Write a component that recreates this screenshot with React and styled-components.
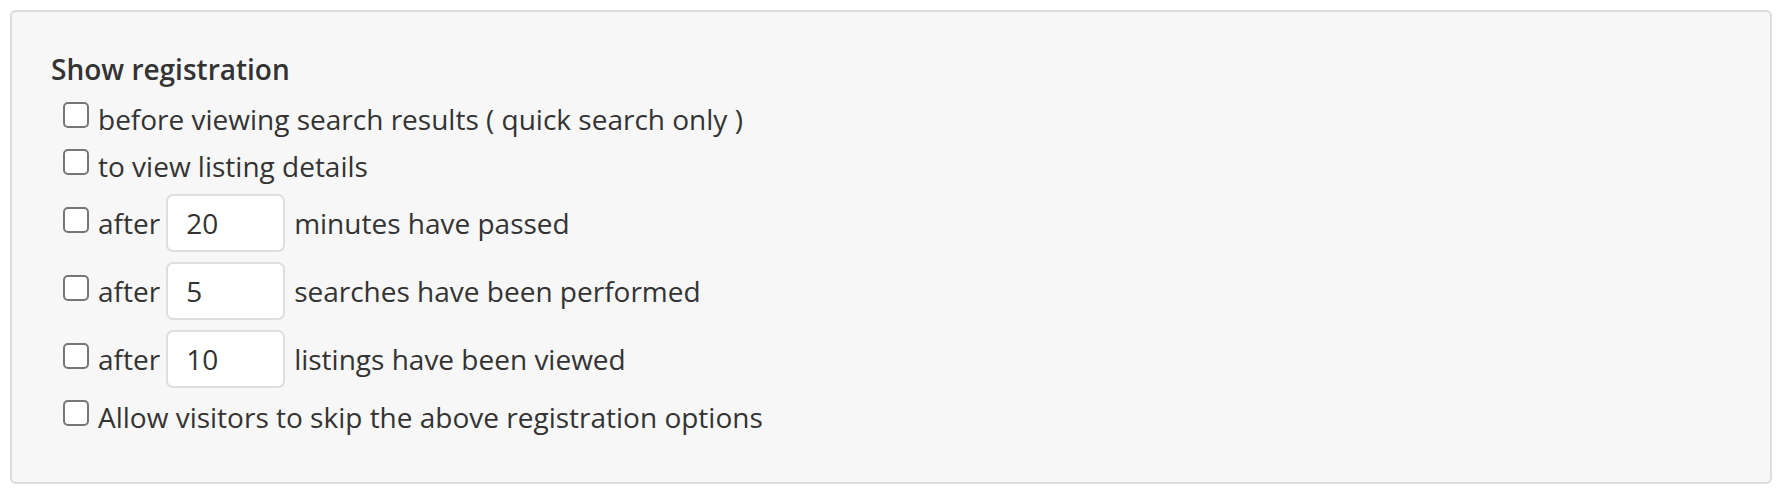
import React, { useState } from "react";
import styled, { createGlobalStyle } from "styled-components";

const GlobalStyle = createGlobalStyle`
  html, body {
    margin: 0;
    padding: 0;
    background: #fff;
  }
  body {
    font-family: "Open Sans", "Liberation Sans", sans-serif;
    color: #333;
  }
`;

const Page = styled.div`
  padding: 10px 0 0 10px;
`;

const Panel = styled.fieldset`
  box-sizing: border-box;
  width: 1762px;
  height: 474px;
  margin: 0;
  padding: 34px 36px 0 39px;
  background: #f7f7f7;
  border: 2px solid #dcdcdc;
  border-radius: 6px;
`;

const Title = styled.div`
  font-size: 28px;
  font-weight: 600;
  line-height: 47px;
  color: #333;
  margin-bottom: 2px;
`;

const Row = styled.label`
  display: flex;
  align-items: center;
  min-height: 47px;
  padding-left: 12px;
  font-size: 28px;
  line-height: 40px;
  color: #333;
  white-space: pre;
`;

const Check = styled.input.attrs({ type: "checkbox" })`
  appearance: none;
  box-sizing: border-box;
  width: 26px;
  height: 26px;
  margin: 0 9px 7px 0;
  background: #fff;
  border: 2px solid #767676;
  border-radius: 5px;
  flex: none;
`;

const Num = styled.input`
  box-sizing: border-box;
  width: 119px;
  height: 58px;
  margin: 5px 9px 5px 6px;
  padding: 0 0 0 18px;
  background: #fff;
  border: 2px solid #dedede;
  border-radius: 7px;
  font-family: "Open Sans", "Liberation Sans", sans-serif;
  font-size: 28px;
  color: #333;
  outline: none;
`;

const rows = [
  { text: "before viewing search results ( quick search only )" },
  { text: "to view listing details" },
  { before: "after", value: "20", text: "minutes have passed" },
  { before: "after", value: "5", text: "searches have been performed" },
  { before: "after", value: "10", text: "listings have been viewed" },
  { text: "Allow visitors to skip the above registration options" },
];

const OptionRow = ({ before, value, text }) => {
  const [val, setVal] = useState(value);
  return (
    <Row>
      <Check />
      {before ? (
        <>
          <span>{before}</span>
          <Num value={val} onChange={(e) => setVal(e.target.value)} />
        </>
      ) : null}
      <span>{text}</span>
    </Row>
  );
};

export default function App() {
  return (
    <Page>
      <GlobalStyle />
      <Panel>
        <Title>Show registration</Title>
        {rows.map((r, i) => (
          <OptionRow key={i} {...r} />
        ))}
      </Panel>
    </Page>
  );
}
